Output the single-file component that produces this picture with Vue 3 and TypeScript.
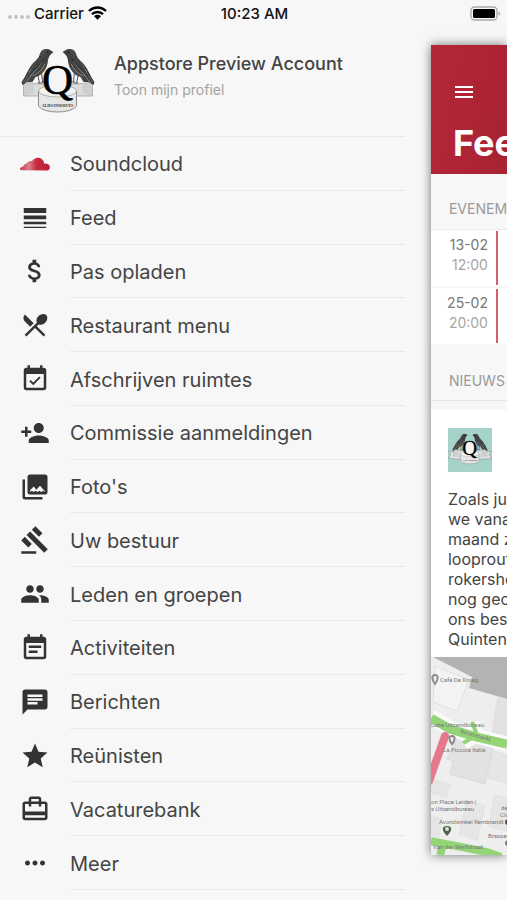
<script setup lang="ts">
interface MenuItem {
  label: string
  path?: string
}

interface AgendaItem {
  date: string
  time: string
}

const menu: MenuItem[] = [
  { label: 'Soundcloud' },
  { label: 'Feed', path: 'M3 17h18v-2H3v2zm0 3h18v-1H3v1zm0-7h18v-3H3v3zm0-9v4h18V4H3z' },
  {
    label: 'Pas opladen',
    path: 'M11.8 10.9c-2.27-.59-3-1.2-3-2.15 0-1.09 1.01-1.85 2.7-1.85 1.78 0 2.44.85 2.5 2.1h2.21c-.07-1.72-1.12-3.3-3.21-3.81V3h-3v2.16c-1.94.42-3.5 1.68-3.5 3.61 0 2.31 1.91 3.46 4.7 4.13 2.5.6 3 1.48 3 2.41 0 .69-.49 1.79-2.7 1.79-2.06 0-2.87-.92-2.98-2.1h-2.2c.12 2.19 1.76 3.42 3.68 3.83V21h3v-2.15c1.95-.37 3.5-1.5 3.5-3.55 0-2.84-2.43-3.81-4.7-4.4z',
  },
  {
    label: 'Restaurant menu',
    path: 'M8.1 13.34l2.83-2.83L3.91 3.5c-1.56 1.56-1.56 4.09 0 5.66l4.19 4.18zm6.78-1.81c1.53.71 3.68.21 5.27-1.38 1.91-1.91 2.28-4.65.81-6.12-1.46-1.46-4.2-1.1-6.12.81-1.59 1.59-2.09 3.74-1.38 5.27L3.7 19.87l1.41 1.41L12 14.41l6.88 6.88 1.41-1.41L13.41 13l1.47-1.47z',
  },
  {
    label: 'Afschrijven ruimtes',
    path: 'M16.53 11.06L15.47 10l-4.88 4.88-2.12-2.12-1.06 1.06L10.59 17l5.94-5.94zM19 3h-1V1h-2v2H8V1H6v2H5c-1.11 0-1.99.9-1.99 2L3 19c0 1.1.89 2 2 2h14c1.1 0 2-.9 2-2V5c0-1.1-.9-2-2-2zm0 16H5V8h14v11z',
  },
  {
    label: 'Commissie aanmeldingen',
    path: 'M15 12c2.21 0 4-1.79 4-4s-1.79-4-4-4-4 1.79-4 4 1.79 4 4 4zm-9-2V7H4v3H1v2h3v3h2v-3h3v-2H6zm9 4c-2.67 0-8 1.34-8 4v2h16v-2c0-2.66-5.33-4-8-4z',
  },
  {
    label: "Foto's",
    path: 'M22 16V4a2 2 0 0 0-2-2H8a2 2 0 0 0-2 2v12a2 2 0 0 0 2 2h12a2 2 0 0 0 2-2M8 16V14.500L11 11.500L13.030 14.200L16 11L20 15.500V16L18.500 15L17 16L15.500 15L14 16L12.500 15L11 16L9.500 15zM2 6v14a2 2 0 0 0 2 2h14v-2H4V6z',
  },
  {
    label: 'Uw bestuur',
    path: 'M1 21h12v2H1v-2zM5.245 8.07l2.83-2.827 14.14 14.142-2.828 2.828L5.245 8.07zM12.317 1l5.657 5.656-2.83 2.83-5.654-5.66L12.317 1zM3.825 9.485l5.657 5.657-2.828 2.828-5.657-5.657 2.828-2.828z',
  },
  {
    label: 'Leden en groepen',
    path: 'M16 11c1.66 0 2.99-1.34 2.99-3S17.66 5 16 5c-1.66 0-3 1.34-3 3s1.34 3 3 3zm-8 0c1.66 0 2.99-1.34 2.99-3S9.66 5 8 5C6.34 5 5 6.34 5 8s1.34 3 3 3zm0 2c-2.33 0-7 1.17-7 3.5V19h14v-2.5c0-2.33-4.67-3.5-7-3.5zm8 0c-.29 0-.62.02-.97.05 1.16.84 1.97 1.97 1.97 3.45V19h6v-2.5c0-2.33-4.67-3.5-7-3.5z',
  },
  {
    label: 'Activiteiten',
    path: 'M17 10H7v2h10v-2zm2-7h-1V1h-2v2H8V1H6v2H5c-1.11 0-1.99.9-1.99 2L3 19c0 1.1.89 2 2 2h14c1.1 0 2-.9 2-2V5c0-1.1-.9-2-2-2zm0 16H5V8h14v11zm-5-5H7v2h7v-2z',
  },
  {
    label: 'Berichten',
    path: 'M20 2H4c-1.1 0-1.99.9-1.99 2L2 22l4-4h14c1.1 0 2-.9 2-2V4c0-1.1-.9-2-2-2zM6 9h12v2H6V9zm8 5H6v-2h8v2zm4-6H6V6h12v2z',
  },
  {
    label: 'Reünisten',
    path: 'M12 17.27L18.18 21l-1.64-7.03L22 9.24l-7.19-.61L12 2 9.19 8.63 2 9.24l5.46 4.73L5.82 21z',
  },
  {
    label: 'Vacaturebank',
    path: 'M20 6h-3V4c0-1.11-.89-2-2-2H9c-1.11 0-2 .89-2 2v2H4c-1.11 0-2 .89-2 2v11c0 1.11.89 2 2 2h16c1.11 0 2-.89 2-2V8c0-1.11-.89-2-2-2zM9 4h6v2H9V4zm11 15H4v-2h16v2zm0-5H4V8h3v2h2V8h6v2h2V8h3v6z',
  },
  {
    label: 'Meer',
    path: 'M6 10c-1.1 0-2 .9-2 2s.9 2 2 2 2-.9 2-2-.9-2-2-2zm12 0c-1.1 0-2 .9-2 2s.9 2 2 2 2-.9 2-2-.9-2-2-2zm-6 0c-1.1 0-2 .9-2 2s.9 2 2 2 2-.9 2-2-.9-2-2-2z',
  },
]

const agenda: AgendaItem[] = [
  { date: '13-02', time: '12:00' },
  { date: '25-02', time: '20:00' },
]

const article: string[] = [
  'Zoals jul',
  'we vanaf',
  'maand z',
  'looproute',
  'rokersho',
  'nog geo',
  'ons best',
  'Quinten',
]
</script>

<template>
  <div class="app">
    <svg class="defs" width="0" height="0" aria-hidden="true">
      <defs>
        <linearGradient id="feather" x1="0" y1="0" x2="1" y2="1">
          <stop offset="0" stop-color="#777" />
          <stop offset="0.5" stop-color="#3d3d3d" />
          <stop offset="1" stop-color="#6a6a6a" />
        </linearGradient>
        <linearGradient id="cloud" x1="0" y1="0" x2="1" y2="0">
          <stop offset="0" stop-color="#c93a4a" />
          <stop offset="0.3" stop-color="#d9808a" />
          <stop offset="0.55" stop-color="#c62c40" />
          <stop offset="1" stop-color="#bf1e33" />
        </linearGradient>
        <symbol id="raven" viewBox="0 0 36 38">
          <path d="M17 26l2 9m-2 0h5M21 24l1 10m-1 0h4" fill="none" stroke="#555" stroke-width="1" />
          <path
            d="M33 4C30 3 30 1 26 1c-4 0-6 2-7 6-1 4-5 6-8 10-4 5-6 12-10 17l1 3 5-3 5 0 3-5c4-1 8-4 10-8 3-5 2-10 4-13 1-2 3-3 4-4z"
            fill="url(#feather)"
          />
          <path d="M19 10c-4 5-8 8-11 16m14-13c-3 6-7 9-12 15m14-12c-2 6-6 9-12 12M7 27l-4 7m8-7l-6 8" fill="none" stroke="#a5a5a5" stroke-width="0.700" />
          <path d="M20 8c-3 6-8 9-11 14m14-11c-2 5-6 8-10 11M8 24l-5 9" fill="none" stroke="#222" stroke-width="0.800" />
          <circle cx="27" cy="4" r="0.800" fill="#111" />
        </symbol>
        <symbol id="crest" viewBox="0 0 75 66">
          <path d="M3 34l14 2h41l14-2v14H3z" fill="#dcdcdc" stroke="#8b8b8b" stroke-width="0.600" />
          <path d="M3 34l10 3v8L3 48M72 34l-10 3v8l10 3" fill="#c4c4c4" opacity="0.600" />
          <use href="#raven" x="0" y="0" width="36" height="38" />
          <use href="#raven" x="0" y="0" width="36" height="38" transform="translate(75 0) scale(-1 1)" />
          <path d="M18 43v15c5 8 33 8 38 0V43z" fill="#e6e6e6" stroke="#777" stroke-width="0.800" />
          <ellipse cx="37" cy="43" rx="19" ry="6" fill="#f2f2f2" stroke="#888" stroke-width="0.600" />
          <ellipse cx="37" cy="32" rx="12" ry="14" fill="#f5f5f5" />
          <text class="crest-letter" x="37" y="46" text-anchor="middle">Q</text>
          <text class="crest-motto" x="37" y="59" text-anchor="middle">ALIIS INSERVIO</text>
        </symbol>
      </defs>
    </svg>

    <header class="status">
      <div class="carrier">
        <span class="dots"><i v-for="n in 4" :key="n" /></span>
        <span>Carrier</span>
        <svg class="wifi" viewBox="0 0 19 14" aria-hidden="true">
          <path d="M1 5a12.200 12.200 0 0 1 17 0M4 8.200a8 8 0 0 1 11 0" fill="none" stroke="#000" stroke-width="2.400" />
          <path d="M6 10.200a5 5 0 0 1 7 0L9.500 13.800z" fill="#000" />
        </svg>
      </div>
      <span>10:23 AM</span>
      <svg class="battery" viewBox="0 0 31 15" aria-hidden="true">
        <rect x="1" y="1" width="26" height="13" rx="3.500" fill="#f7f7f7" stroke="#a9a9a9" stroke-width="1.300" />
        <rect x="3" y="3" width="22" height="9" rx="1.500" fill="#000" />
        <path d="M28.500 5.500c2 .5 2 3.500 0 4z" fill="#a9a9a9" />
      </svg>
    </header>

    <main class="body">
      <aside class="drawer">
        <a class="profile" href="#profiel">
          <svg class="crest" aria-hidden="true"><use href="#crest" /></svg>
          <span class="who">
            <strong>Appstore Preview Account</strong>
            <small>Toon mijn profiel</small>
          </span>
        </a>
        <nav class="menu">
          <a v-for="item in menu" :key="item.label" class="item" href="#menu">
            <svg class="icon" viewBox="0 0 24 24" aria-hidden="true">
              <path v-if="item.path" :d="item.path" />
              <path
                v-else
                d="M1 16.900C-.5 16.500-.2 14.900 1 14.500c.7-.2 1.500-.4 2-1.300.5-1 1.300-1.500 2.300-1.400.6-1.500 2.200-2.500 4.200-2 1-1.800 2.900-2.900 4.900-2.900 2.700 0 4.800 1.900 5 4.800 2.600-.3 4.500 1 4.500 2.800 0 1.600-1.200 2.700-2.700 2.700z"
                fill="url(#cloud)"
              />
            </svg>
            <span class="label">{{ item.label }}</span>
          </a>
        </nav>
      </aside>

      <section class="panel">
        <div class="bar">
          <button class="burger" type="button" aria-label="Menu"><i /><i /><i /></button>
          <h1>Feed</h1>
        </div>
        <h2>EVENEMENTEN</h2>
        <ul class="agenda">
          <li v-for="event in agenda" :key="event.date">
            <div class="when">
              <b>{{ event.date }}</b>
              <span>{{ event.time }}</span>
            </div>
          </li>
        </ul>
        <h2 class="ruled">NIEUWS</h2>
        <article>
          <div class="post">
            <svg class="thumb" viewBox="0 0 44 44" aria-hidden="true">
              <rect width="44" height="44" fill="#a5d3c9" />
              <path d="M0 23l4 1 5-1h26l5 1 4-1-3 4 3 3-6 1H6l-6-1 3-3z" fill="#e2e6e5" stroke="#788" stroke-width="0.500" />
              <use href="#crest" x="4" y="5" width="36" height="32" />
            </svg>
            <p><span v-for="line in article" :key="line">{{ line }}</span></p>
          </div>
          <svg class="map" viewBox="0 0 76 198" preserveAspectRatio="xMinYMin slice" role="img" aria-label="Kaart">
            <rect width="76" height="198" fill="#eeeeee" />
            <path d="M2 0h74v42L38 31l3-11z" fill="#b3b3b3" />
            <path d="M4 9l34 14-12 31L2 45z" fill="#f3f3f3" stroke="#d8d8d8" stroke-width="0.700" />
            <path d="M66 40l10 3v40l-16-4z" fill="#e1e1e1" />
            <path d="M26 81l36 9-8 37-35-10 3-13-6-2z" fill="#e2e2e2" stroke="#d4d4d4" stroke-width="0.700" />
            <path d="M62 94l14 4v28l-19-5zM36 143l18 6-8 34-18-6zM64 138l12 3v33l-18-5z" fill="#e6e6e6" stroke="#dadada" stroke-width="0.600" />
            <path d="M0 121l20 6-4 14-16-4zM0 158l12 3-4 20-8-2z" fill="#e5e5e5" />
            <path d="M0 60L25 74 76 87M32 86L45 77 41 66" fill="none" stroke="#fafafa" stroke-width="15" />
            <path d="M0 61L19 72 46 80 76 87" fill="none" stroke="#94d477" stroke-width="9" />
            <path d="M32 86L46 78 41 65" fill="none" stroke="#94d477" stroke-width="4" />
            <path d="M0 184L26 189 56 195 70 200M12 187L9 198" fill="none" stroke="#94d477" stroke-width="8" />
            <path d="M14 79L-2 124" fill="none" stroke="#e5788c" stroke-width="8" stroke-linecap="round" />
            <g fill="none" stroke="#8c8c8c" stroke-width="2">
              <path d="M4 27c-3-4-4-9 0-9s3 5 0 9z" />
              <path d="M21 87c-3-4-4-8 0-8s3 4 0 8z" />
            </g>
            <path d="M16 179c-7-7-4-10 0-10s7 3 0 10z" fill="#4c6548" />
            <circle cx="16" cy="172" r="2" fill="#d5e3d1" />
            <circle cx="77" cy="165" r="3" fill="#444" />
            <circle cx="77" cy="186" r="3" fill="#777" />
            <g class="places">
              <text x="9" y="25">Café De Kroeg</text>
              <text x="0" y="70">Luba Uitzendbureau</text>
              <text x="29" y="76" transform="rotate(16 29 76)">Boommarkt</text>
              <text x="12" y="95">La Piccola Italia</text>
              <text x="0" y="147">on Place Leiden |</text>
              <text x="0" y="154">s Uitzendbureau</text>
              <text x="8" y="167">Avondwinkel Rembrandt</text>
              <text x="70" y="153">de</text>
              <text x="69" y="160">Clu</text>
              <text x="57" y="181">Brasserie</text>
              <text x="2" y="192">Van der Werfstraat</text>
            </g>
          </svg>
        </article>
      </section>
    </main>
  </div>
</template>

<style>
body {
  margin: 0;
  background: #f7f7f7;
}
</style>

<style scoped>
.app {
  display: flex;
  flex-direction: column;
  min-height: 100vh;
  overflow: hidden;
  background: #f7f7f7;
  color: #444;
  font-family: Inter, Roboto, sans-serif;
}

.defs {
  position: absolute;
}

.crest-letter {
  font: 43px 'Liberation Serif', serif;
  fill: #000;
  stroke: #000;
  stroke-width: 0.6;
}

.crest-motto {
  font: bold 4px 'Liberation Serif', serif;
  fill: #333;
}

.status {
  display: grid;
  grid-template-columns: 1fr auto 1fr;
  align-items: center;
  height: 26px;
  padding: 0 6px 0 8px;
  color: #111;
  font-size: 15px;
  font-weight: 500;
}

.carrier {
  display: flex;
  align-items: center;
  gap: 4px;
}

.dots {
  display: flex;
  gap: 2px;
  padding-top: 8px;
}

.dots i {
  width: 4px;
  height: 4px;
  border-radius: 50%;
  background: #c4c4c4;
}

.wifi {
  width: 19px;
  height: 14px;
}

.battery {
  justify-self: end;
  width: 31px;
  height: 15px;
}

.body {
  display: flex;
  flex: 1;
  gap: 26px;
}

.drawer {
  display: flex;
  flex: 1;
  flex-direction: column;
  min-width: 0;
  padding-bottom: 10px;
}

.profile {
  display: flex;
  gap: 18px;
  box-sizing: border-box;
  height: 111px;
  padding: 22px 0 0 20px;
  border-bottom: 1px solid #e8e8e8;
  color: inherit;
  text-decoration: none;
}

.crest {
  width: 76px;
  height: 66px;
}

.who {
  display: flex;
  flex-direction: column;
  gap: 4px;
  padding-top: 4px;
}

.who strong {
  font-size: 18px;
  font-weight: 500;
  line-height: 24px;
}

.who small {
  color: #a3a3a3;
  font-size: 14px;
  line-height: 20px;
}

.menu {
  display: grid;
  flex: 1;
  grid-auto-rows: 1fr;
}

.item {
  display: flex;
  align-items: stretch;
  gap: 20px;
  padding-left: 20px;
  color: inherit;
  font-size: 20px;
  text-decoration: none;
}

.icon {
  align-self: center;
  width: 30px;
  height: 30px;
  fill: #333;
}

.label {
  display: flex;
  flex: 1;
  align-items: center;
  padding-top: 2px;
  border-bottom: 1px solid #e8e8e8;
}

.panel {
  display: flex;
  flex: 0 0 15vw;
  flex-direction: column;
  min-width: 0;
  margin: 19px 0 45px;
  background: #f7f7f7;
  box-shadow: 0 0 10px rgba(0, 0, 0, 0.55);
  white-space: nowrap;
}

.bar {
  display: flex;
  flex-direction: column;
  gap: 22px;
  box-sizing: border-box;
  height: 129px;
  padding: 40px 0 0 22px;
  background: linear-gradient(100deg, #b42739, #a82233);
}

.burger {
  display: flex;
  flex-direction: column;
  gap: 3px;
  width: 22px;
  padding: 1px 2px;
  border: 0;
  background: none;
}

.burger i {
  width: 18px;
  height: 2px;
  background: #fff;
}

h1 {
  margin: 0;
  color: #fff;
  font-size: 36px;
  font-weight: 700;
  line-height: 44px;
}

h2 {
  box-sizing: border-box;
  height: 55px;
  margin: 0;
  padding: 16px 0 0 18px;
  color: #999;
  font-size: 14px;
  font-weight: 400;
  line-height: 38px;
}

.ruled {
  border-bottom: 1px solid #e6e6e6;
}

.agenda {
  display: flex;
  flex-direction: column;
  gap: 2px;
  margin: 0 0 2px;
  padding: 0;
  border-top: 1px solid #ececec;
  list-style: none;
}

.agenda li {
  padding: 1px 0;
  background: #fff;
}

.when {
  display: flex;
  flex-direction: column;
  box-sizing: border-box;
  width: 67px;
  height: 54px;
  padding: 4px 8px 0 0;
  border-right: 2px solid #d3616f;
  color: #a6a6a6;
  font-size: 14px;
  line-height: 20px;
  text-align: right;
}

.when b {
  color: #777;
  font-weight: 400;
}

article {
  display: flex;
  flex: 1;
  flex-direction: column;
  margin-top: 9px;
  background: #fff;
}

.post {
  padding: 18px 0 8px 17px;
}

.thumb {
  display: block;
  width: 44px;
  height: 44px;
}

p {
  display: flex;
  flex-direction: column;
  margin: 17px 0 0;
  font-size: 16px;
  line-height: 20px;
}

.map {
  display: block;
  flex: 1 1 0;
  width: 100%;
  min-height: 160px;
}

.places {
  fill: #777;
  font: 6px Roboto, sans-serif;
}
</style>
